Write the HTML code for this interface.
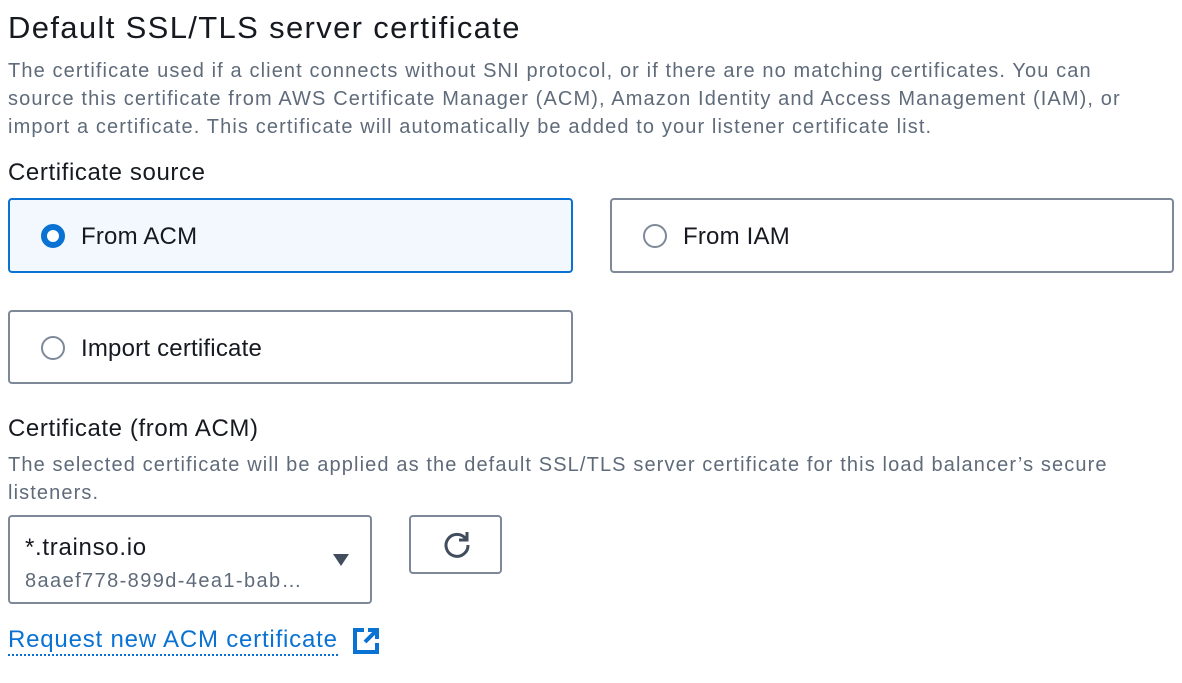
<!DOCTYPE html>
<html><head><meta charset="utf-8"><style>
body{margin:0;width:1182px;height:683px;background:#fff;font-family:"Liberation Sans",sans-serif;color:#16191f;position:relative;overflow:hidden}
.a{position:absolute;white-space:nowrap}
h1{position:absolute;left:8px;top:10px;margin:0;font-size:31px;font-weight:400;letter-spacing:1.35px}
.d{font-size:20px;color:#5f6b7a;line-height:28px;letter-spacing:1.12px}
.lbl{font-size:24px;letter-spacing:0.6px}
.tile{position:absolute;box-sizing:border-box;border:2px solid #7d8998;border-radius:4px;background:#fff}
.tile.sel{border-color:#0972d3;background:#f2f8fd}
.rad{position:absolute;left:31px;top:24px;width:24px;height:24px;box-sizing:border-box;border:2px solid #7d8998;border-radius:50%}
.sel .rad{border:6px solid #0972d3;background:#fff}
.tile span{position:absolute;left:71px;top:23px;font-size:24px;letter-spacing:0.2px}
</style></head><body>
<h1>Default SSL/TLS server certificate</h1>
<div class="a d" style="left:8px;top:57px">The certificate used if a client connects without SNI protocol, or if there are no matching certificates. You can<br>source this certificate from AWS Certificate Manager (ACM), Amazon Identity and Access Management (IAM), or<br>import a certificate. This certificate will automatically be added to your listener certificate list.</div>
<div class="a lbl" style="left:8px;top:159px">Certificate source</div>
<div class="tile sel" style="left:8px;top:198px;width:565px;height:75px"><div class="rad"></div><span>From ACM</span></div>
<div class="tile" style="left:610px;top:198px;width:564px;height:75px"><div class="rad"></div><span>From IAM</span></div>
<div class="tile" style="left:8px;top:310px;width:565px;height:74px"><div class="rad"></div><span>Import certificate</span></div>
<div class="a lbl" style="left:8px;top:415px">Certificate (from ACM)</div>
<div class="a d" style="left:8px;top:451px">The selected certificate will be applied as the default SSL/TLS server certificate for this load balancer’s secure<br>listeners.</div>
<div class="tile" style="left:8px;top:515px;width:364px;height:89px">
<div class="a" style="left:15px;top:17px;font-size:24px;letter-spacing:0.7px">*.trainso.io</div>
<div class="a" style="left:15px;top:53px;font-size:20px;color:#5f6b7a;letter-spacing:1.4px">8aaef778-899d-4ea1-bab…</div>
<svg class="a" style="left:322px;top:36px" width="18" height="14"><path d="M1 1H17L9 13Z" fill="#414d5c"/></svg>
</div>
<div class="tile" style="left:409px;top:515px;width:93px;height:59px">
<svg class="a" style="left:30px;top:12px" width="32" height="32" viewBox="0 0 32 32"><path d="M25 10A11 11 0 1 0 27 16" fill="none" stroke="#414d5c" stroke-width="3"/><path d="M26 3V11H18" fill="none" stroke="#414d5c" stroke-width="3"/></svg>
</div>
<div class="a" style="left:8px;top:626px;font-size:24px;letter-spacing:0.8px;color:#0972d3;border-bottom:2px dotted #0972d3">Request new ACM certificate</div>
<svg class="a" style="left:352px;top:627px" width="28" height="28" viewBox="0 0 28 28"><path d="M12 3H3V25H25V16" fill="none" stroke="#0972d3" stroke-width="4"/><path d="M16 3H25V12M25 3L13 15" fill="none" stroke="#0972d3" stroke-width="4"/></svg>
</body></html>
